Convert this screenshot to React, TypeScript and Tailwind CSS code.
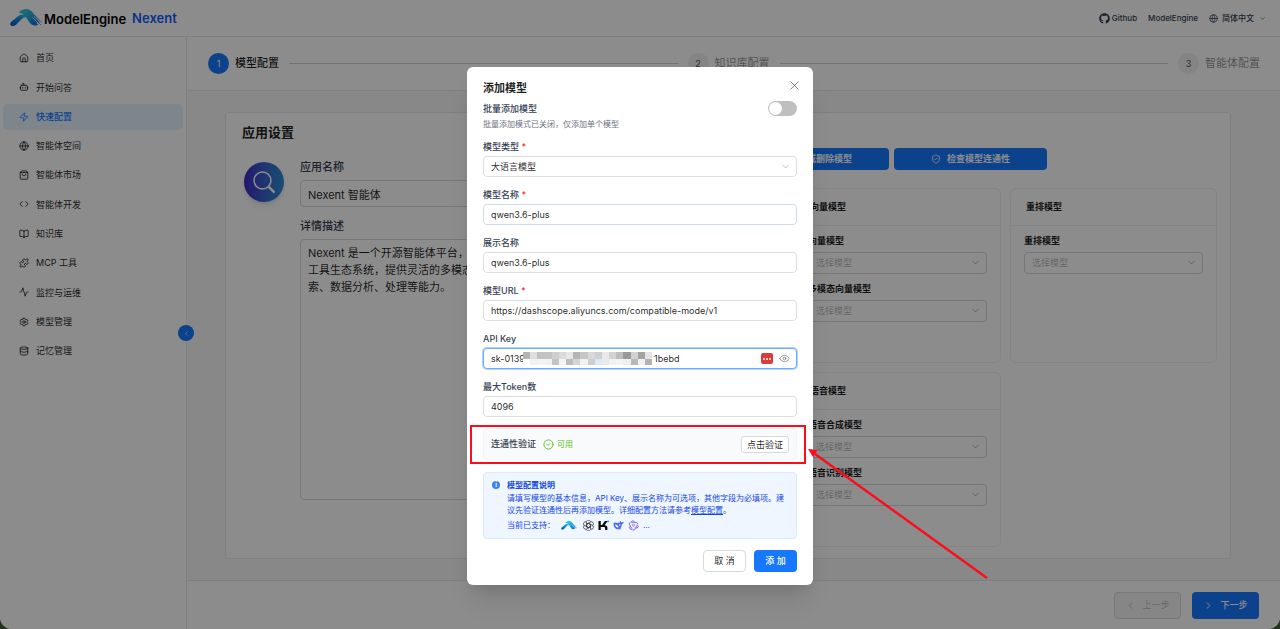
import React from "react";
import {
  Activity, BookOpen, Bot, ChevronDown, ChevronLeft, ChevronRight, CircleCheck, Code, Database,
  Eye, Globe, House, PenLine, Puzzle, RefreshCw, Settings, ShieldCheck, ShoppingBag, X, Zap,
} from "lucide-react";
import { FaGithub } from "react-icons/fa";

const menu = [
  { icon: House, label: "首页" },
  { icon: Bot, label: "开始问答" },
  { icon: Zap, label: "快速配置", active: true },
  { icon: Globe, label: "智能体空间" },
  { icon: ShoppingBag, label: "智能体市场" },
  { icon: Code, label: "智能体开发" },
  { icon: BookOpen, label: "知识库" },
  { icon: Puzzle, label: "MCP 工具" },
  { icon: Activity, label: "监控与运维" },
  { icon: Settings, label: "模型管理" },
  { icon: Database, label: "记忆管理" },
];

function Mark({ className, id }: { className: string; id: string }) {
  return (
    <svg viewBox="0 0 32 18" className={className} aria-hidden="true">
      <defs>
        <linearGradient id={`${id}-a`} x1="0" y1="1" x2="1" y2="0">
          <stop offset="0" stopColor="#0b4fc4" />
          <stop offset="0.5" stopColor="#1287dc" />
          <stop offset="1" stopColor="#3bd0dc" />
        </linearGradient>
        <linearGradient id={`${id}-b`} x1="0" y1="0" x2="1" y2="1">
          <stop offset="0" stopColor="#43d3dd" />
          <stop offset="0.5" stopColor="#26a9df" />
          <stop offset="1" stopColor="#0b5bd0" />
        </linearGradient>
      </defs>
      <path d="M8.500 4C10.500 1.300 13 0 16 0c3.200 0 5 1.300 6.700 3.600L30 13.500h-3.500l1.500 2.200c-3 1.600-6.200.8-8-1.700l-4.300-6.200C14 5.200 11.500 3.600 8.500 4z" fill={`url(#${id}-b)`} />
      <path d="M1.300 12.800 8 7.300c3.300-2.700 7-2.500 9 .7-2.200-.1-3.800.7-5.200 2L6 15.800c-1.500 1.500-3.600 2-5 .8-1.200-1.200-.8-2.900.3-3.800z" fill={`url(#${id}-a)`} />
      <path d="m22.500 8.500 8 8M24 7.500l8 7.500" stroke="#fff" strokeWidth="0.8" />
      <path d="m24.500 6 7 7.500M23.500 8.500l7.500 7.500" stroke="#2b6fd0" strokeWidth="0.7" />
    </svg>
  );
}

function Step({ n, title, active }: { n: number; title: string; active?: boolean }) {
  return (
    <li className="flex shrink-0 items-center gap-[6px]">
      <span className={active
        ? "flex size-[21px] items-center justify-center rounded-full bg-[#1677ff] text-[9px] text-white"
        : "flex size-[21px] items-center justify-center rounded-full bg-[#f0f0f0] text-[9px] font-medium text-black/65"}>{n}</span>
      <span className={active ? "text-[11px] font-medium text-black/88" : "text-[11px] text-black/45"}>{title}</span>
    </li>
  );
}

function ModelSelect({ label }: { label: string }) {
  return (
    <label className="flex flex-col">
      <span className="text-[9px] leading-[15px] font-semibold text-black/90">{label}</span>
      <span className="relative mt-1 block">
        <select defaultValue="" className="block h-[22px] w-full appearance-none rounded border border-[#d9d9d9] bg-white px-[7px] text-[9px] text-black/30">
          <option value="">选择模型</option>
        </select>
        <ChevronDown className="pointer-events-none absolute top-[5px] right-[6px] size-[11px] text-black/35" strokeWidth={1.8} />
      </span>
    </label>
  );
}

function ModelCard({ title, fields }: { title: string; fields: string[] }) {
  return (
    <section className="h-[175px] rounded-md border border-[#f0f0f0] bg-white">
      <h3 className="flex h-[37px] items-center border-b border-[#f0f0f0] px-[15px] text-[9px] font-semibold text-black/90">{title}</h3>
      <div className="flex flex-col gap-[7px] px-[13px] pt-[7px]">
        {fields.map((f) => <ModelSelect key={f} label={f} />)}
      </div>
    </section>
  );
}

const inputStyle = "block h-[21px] w-full rounded border border-[#dedede] bg-white px-[7px] text-[9px] text-black/88 outline-none";

function Field({ label, required, children }: { label: string; required?: boolean; children: React.ReactNode }) {
  return (
    <label className="flex flex-col gap-[2px]">
      <span className="text-[9px] leading-[15px] font-medium text-gray-700">
        {label}{required && <span className="text-red-500"> *</span>}
      </span>
      {children}
    </label>
  );
}

const cells = [
  "#b5b5b5", "#dedede", "#c2c2c2", "#c4c4c4", "#cfcfcf", "#dadada", "#e6e6e6", "#b4b4b4", "#c6c6c6", "#d8d8d8", "#cfcfcf", "#e9e9e9", "#d3d3d3", "#bdbdbd", "#999999", "#d2d2d2", "#a3a3a3", "#e3e3e3",
  "#ffffff", "#f1f1f1", "#f4f4f4", "#f1f1f1", "#c4c4c4", "#f4f4f4", "#bdbdbd", "#d5d5d5", "#f1f1f1", "#cdcdcd", "#dbe9fb", "#e9e9e9", "#f1f1f1", "#f4f4f4", "#efefef", "#b8b8b8", "#f1f1f1", "#b3b3b3",
];

function Mosaic() {
  return (
    <svg viewBox="0 0 18 2" preserveAspectRatio="none" shapeRendering="crispEdges" className="absolute top-[4px] left-[40px] h-[13px] w-[129px]" aria-hidden="true">
      {cells.map((c, i) => <rect key={i} x={i % 18} y={Math.floor(i / 18)} width="1" height="1" fill={c} />)}
    </svg>
  );
}

function Providers() {
  return (
    <div className="flex items-center gap-[4px]">
      <Mark id="provider" className="mr-[2px] h-[9px] w-[16px]" />
      <svg viewBox="0 0 24 24" className="size-[11px]" aria-hidden="true">
        <g fill="none" stroke="#333" strokeWidth="1.500">
          {[0, 60, 120, 180, 240, 300].map((a) => (
            <path key={a} transform={`rotate(${a} 12 12)`} d="M12 7.300 16.200 9.700V16M7.500 6.500a4.700 4.700 0 0 1 9-3M7.500 6.500V13" />
          ))}
        </g>
      </svg>
      <svg viewBox="0 0 24 24" className="size-[11px]" aria-hidden="true">
        <path d="M1 2h5v9h3l6-9h6l-6.500 9.500c4 0 6 2 6 5.500v5h-5v-4c0-2-1-3-3-3H6v7H1z" fill="#0a0a0a" />
        <circle cx="22" cy="3" r="2" fill="#1783ff" />
      </svg>
      <svg viewBox="0 0 24 24" className="size-[11px]" aria-hidden="true">
        <path d="M1 7c3-2 6-2 9 0 2-2 3-2 5-1 0-2 0-3 2-4 0 2 1 3 2 3l4-1c0 3-1 5-4 6 0 4-1 6-3 8l2 2c-3 1-5 0-6 0C6 21 1 16 1 7z" fill="#4d6bfe" />
        <path d="M4.500 10c4 0 6 3 8 6-4 1-7-1-8-6z" fill="#eff6ff" />
        <circle cx="14.500" cy="11" r="1.600" fill="#eff6ff" />
      </svg>
      <svg viewBox="0 0 24 24" className="size-[11px]" aria-hidden="true">
        <g fill="none" stroke="#7c5cec" strokeWidth="1.800" strokeLinejoin="round">
          {[0, 120, 240].map((a) => (
            <path key={a} transform={`rotate(${a} 12 12)`} d="M6 6 8.500 2h4l2 3.500h5l2 3.500M14.500 5.500H8" />
          ))}
          <path d="M9 10h6l-3 5z" strokeWidth="1.200" />
        </g>
      </svg>
      <span>...</span>
    </div>
  );
}

function AddModelDialog() {
  return (
    <div role="dialog" aria-modal="true" aria-labelledby="dialog-title" className="relative mt-[67px] w-[346px] rounded-md bg-white px-4 pt-[15px] pb-[13px] shadow-xl">
      <button type="button" aria-label="关闭" className="absolute top-[11px] right-[11px] text-black/45"><X className="size-[15px]" strokeWidth={1.6} /></button>
      <h2 id="dialog-title" className="text-[11px] leading-[12px] font-semibold text-black/88">添加模型</h2>

      <div className="mt-[6px] flex items-start justify-between">
        <div>
          <label htmlFor="batch" className="block text-[9px] leading-[17px] font-medium text-gray-700">批量添加模型</label>
          <p className="text-[8px] leading-[14px] text-gray-500">批量添加模式已关闭，仅添加单个模型</p>
        </div>
        <span className="relative mt-px block h-[15px] w-[29px]">
          <input id="batch" type="checkbox" role="switch" className="block h-full w-full appearance-none rounded-full bg-[#bfbfbf]" />
          <span className="pointer-events-none absolute top-[1px] left-[1px] size-[13px] rounded-full bg-white" />
        </span>
      </div>

      <form className="mt-2 flex flex-col gap-[10px]">
        <Field label="模型类型" required>
          <span className="relative block">
            <select className={`${inputStyle} appearance-none`}><option>大语言模型</option></select>
            <ChevronDown className="pointer-events-none absolute top-[5px] right-[6px] size-[11px] text-black/30" strokeWidth={1.8} />
          </span>
        </Field>
        <Field label="模型名称" required><input className="block h-[21px] w-full rounded border border-[#cfdbec] bg-white px-[7px] text-[9px] text-black/88 outline-none" defaultValue="qwen3.6-plus" /></Field>
        <Field label="展示名称"><input className={inputStyle} defaultValue="qwen3.6-plus" /></Field>
        <Field label="模型URL" required><input className={inputStyle} defaultValue="https://dashscope.aliyuncs.com/compatible-mode/v1" /></Field>
        <Field label="API Key">
          <span className="relative block">
            <input className="block h-[21px] w-full rounded border border-[#69a9ff] bg-white px-[7px] text-[9px] text-black/88 ring-1 ring-[#4096ff]/40 outline-none" defaultValue={"sk-0139" + "\u00a0".repeat(51) + "1bebd"} />
            <Mosaic />
            <span className="absolute top-[5px] right-[24px] flex h-[11px] w-[12px] items-center justify-center gap-px rounded-[2px] bg-[#dc3b36]">
              <i className="size-[2px] rounded-full bg-white" /><i className="size-[2px] rounded-full bg-white" /><i className="size-[2px] rounded-full bg-white" />
            </span>
            <Eye className="absolute top-[5px] right-[7px] size-[11px] text-black/45" strokeWidth={1.8} />
          </span>
        </Field>
        <Field label="最大Token数"><input className={inputStyle} defaultValue="4096" /></Field>
      </form>

      <div className="relative mt-[11px] flex h-[32px] items-center justify-between rounded border border-gray-100 bg-gray-50 px-[7px]">
        <div className="flex items-center">
          <span className="text-[9px] font-medium text-gray-700">连通性验证</span>
          <CircleCheck className="ml-[7px] size-[11px] text-[#52c41a]" />
          <span className="ml-[3px] text-[8px] text-[#52c41a]">可用</span>
        </div>
        <button type="button" className="h-[17px] rounded-[3px] border border-[#d9d9d9] bg-white px-[5px] text-[9px] leading-[15px] text-black/88">点击验证</button>
        <span className="pointer-events-none absolute -top-[4px] -right-[10px] -bottom-[5px] -left-[14px] border-2 border-[#fb0d1b]" />
        <svg viewBox="0 0 180 130" className="pointer-events-none absolute top-[20px] left-[324px] h-[130px] w-[180px]" aria-hidden="true">
          <path d="M7 5 179 129" stroke="#fb0d1b" strokeWidth="2.400" />
          <path d="m0 0 9.500 1L5 8z" fill="#fb0d1b" />
        </svg>
      </div>

      <div className="mt-3 flex gap-[7px] rounded border border-blue-100 bg-blue-50 px-2 pt-[6px] pb-[7px] text-[8px] leading-[12px] text-blue-700">
        <span className="mt-[2px] flex size-[8px] shrink-0 items-center justify-center rounded-full bg-[#3b82f6] text-[6px] font-bold text-white">i</span>
        <div>
          <p className="leading-[13px] font-semibold">模型配置说明</p>
          <p>请填写模型的基本信息，API Key、展示名称为可选项，其他字段为必填项。建议先验证连通性后再添加模型。详细配置方法请参考<a href="#docs" className="underline">模型配置</a>。</p>
          <div className="mt-[3px] flex items-center gap-[6px]"><span>当前已支持：</span><Providers /></div>
        </div>
      </div>

      <div className="mt-[11px] flex justify-end gap-2">
        <button type="button" className="h-[22px] w-[43px] rounded border border-[#d9d9d9] bg-white text-[9px] text-black/88">取 消</button>
        <button type="button" className="h-[22px] w-[43px] rounded bg-[#1677ff] text-[9px] font-medium text-white">添 加</button>
      </div>
    </div>
  );
}

export default function App() {
  return (
    <div className="min-h-screen bg-[#26301f] font-['Inter','Noto_Sans_CJK_SC',sans-serif]">
      <div className="relative flex min-h-screen flex-col overflow-hidden rounded-b-xl bg-white">
        <header className="flex h-[37px] items-center justify-between border-b border-slate-200 pr-[14px] pl-[10px]">
          <a href="#home" className="flex items-center">
            <Mark id="brand" className="h-[18px] w-[32px]" />
            <span className="ml-[2px] pt-[3px] text-[13px] font-semibold text-black">ModelEngine</span>
            <span className="ml-[6px] pt-px text-[13px] font-semibold text-blue-600">Nexent</span>
          </a>
          <nav className="flex items-center gap-[11px] text-[8px] font-medium text-slate-700">
            <a href="#github" className="flex items-center gap-[2px]"><FaGithub className="size-[11px]" />Github</a>
            <a href="#engine">ModelEngine</a>
            <button type="button" className="flex items-center gap-1"><Globe className="size-[9px]" />简体中文<ChevronDown className="ml-px size-[7px]" /></button>
          </nav>
        </header>

        <div className="flex flex-1">
          <aside className="relative w-[187px] shrink-0 border-r border-slate-200 px-[3px] pt-2">
            <nav className="flex h-[319px] flex-col justify-between">
              {menu.map(({ icon: Icon, label, active }) => (
                <a key={label} href="#menu" className={active
                  ? "flex h-[26px] items-center gap-[7px] rounded-[5px] bg-[#e6f4ff] pl-4 text-[9px] font-medium text-[#1677ff]"
                  : "flex h-[26px] items-center gap-[7px] rounded-[5px] pl-4 text-[9px] text-black/88"}>
                  <Icon className="size-[10px]" strokeWidth={2} />{label}
                </a>
              ))}
            </nav>
            <button type="button" aria-label="收起菜单" className="absolute top-[288px] -right-[8px] z-10 flex size-[16px] items-center justify-center rounded-full bg-[#1677ff] text-white"><ChevronLeft className="size-[7px]" /></button>
          </aside>

          <div className="flex min-w-0 flex-1 flex-col">
            <ol className="flex h-[54px] items-center gap-[10px] border-b border-slate-200 pr-[20px] pl-[21px]">
              <Step n={1} title="模型配置" active />
              <li aria-hidden="true" className="h-px flex-1 bg-[#d0d0d0]" />
              <Step n={2} title="知识库配置" />
              <li aria-hidden="true" className="h-px flex-1 bg-[#d0d0d0]" />
              <Step n={3} title="智能体配置" />
            </ol>

            <main className="flex-1 bg-[#f8f8f9] pt-[21px] pr-[49px] pb-[21px] pl-[38px]">
              <div className="flex h-full gap-[13px] rounded border border-slate-200 bg-white px-[13px] pb-[10px] pl-[16px]">
                <section className="min-w-0 flex-1 pt-[9px]">
                  <h2 className="text-[13px] leading-[20px] font-semibold text-black/90">应用设置</h2>
                  <div className="mt-[17px] flex gap-4 pl-[2px]">
                    <span className="mt-[3px] flex size-[40px] shrink-0 items-center justify-center rounded-full bg-linear-to-r from-[#4023c8] to-[#2b8fd0] text-white shadow-md">
                      <svg viewBox="0 0 24 24" className="size-[24px]" fill="none" stroke="currentColor" strokeLinecap="round" aria-hidden="true">
                        <circle cx="10.500" cy="10.500" r="8.500" strokeWidth="1.500" /><path d="m16.800 16.800 5 5" strokeWidth="2.500" />
                      </svg>
                    </span>
                    <div className="flex min-w-0 flex-1 flex-col">
                      <label htmlFor="app-name" className="text-[11px] leading-[17px] font-medium text-gray-700">应用名称</label>
                      <input id="app-name" defaultValue="Nexent 智能体" className="mt-1 h-[27px] rounded border border-[#d9d9d9] px-[7px] text-[11px] text-black/88" />
                      <label htmlFor="app-desc" className="mt-[11px] text-[11px] leading-[17px] font-medium text-gray-700">详情描述</label>
                      <textarea id="app-desc" className="mt-1 h-[261px] resize-none rounded border border-[#d9d9d9] px-[7px] py-[5px] text-[11px] leading-[17px] text-black/88" defaultValue={"Nexent 是一个开源智能体平台，基于 MCP\n工具生态系统，提供灵活的多模态问答、检\n索、数据分析、处理等能力。"} />
                    </div>
                  </div>
                </section>
                <section className="w-[639px] shrink-0 pt-[35px]">
                  <div className="grid grid-cols-[repeat(3,153px)] gap-[5px] text-[9px] font-semibold text-white">
                    <button type="button" className="flex h-[22px] items-center justify-center gap-[6px] rounded bg-[#1677ff]"><RefreshCw className="size-[10px]" />同步模型</button>
                    <button type="button" className="flex h-[22px] items-center justify-center gap-[6px] rounded bg-[#1677ff]"><PenLine className="size-[10px]" />修改或删除模型</button>
                    <button type="button" className="flex h-[22px] items-center justify-center gap-[6px] rounded bg-[#1677ff]"><ShieldCheck className="size-[10px]" />检查模型连通性</button>
                  </div>
                  <div className="mt-[18px] grid grid-cols-3 gap-[9px]">
                    <ModelCard title="大语言模型" fields={["大语言模型"]} />
                    <ModelCard title="向量模型" fields={["向量模型", "多模态向量模型"]} />
                    <ModelCard title="重排模型" fields={["重排模型"]} />
                    <ModelCard title="视觉模型" fields={["视觉模型"]} />
                    <ModelCard title="语音模型" fields={["语音合成模型", "语音识别模型"]} />
                  </div>
                </section>
              </div>
            </main>

            <footer className="flex h-[49px] items-center justify-end gap-[11px] border-t border-slate-200 pr-[21px]">
              <button type="button" disabled className="flex h-[27px] w-[67px] items-center justify-center gap-[6px] rounded border border-[#d9d9d9] bg-black/4 text-[9px] text-black/25"><ChevronLeft className="size-[11px]" />上一步</button>
              <button type="button" className="flex h-[27px] w-[67px] items-center justify-center gap-[6px] rounded bg-[#1677ff] text-[9px] font-medium text-white"><ChevronRight className="size-[11px]" />下一步</button>
            </footer>
          </div>
        </div>

        <div className="absolute inset-0 z-20 flex items-start justify-center bg-black/45">
          <AddModelDialog />
        </div>
      </div>
    </div>
  );
}
